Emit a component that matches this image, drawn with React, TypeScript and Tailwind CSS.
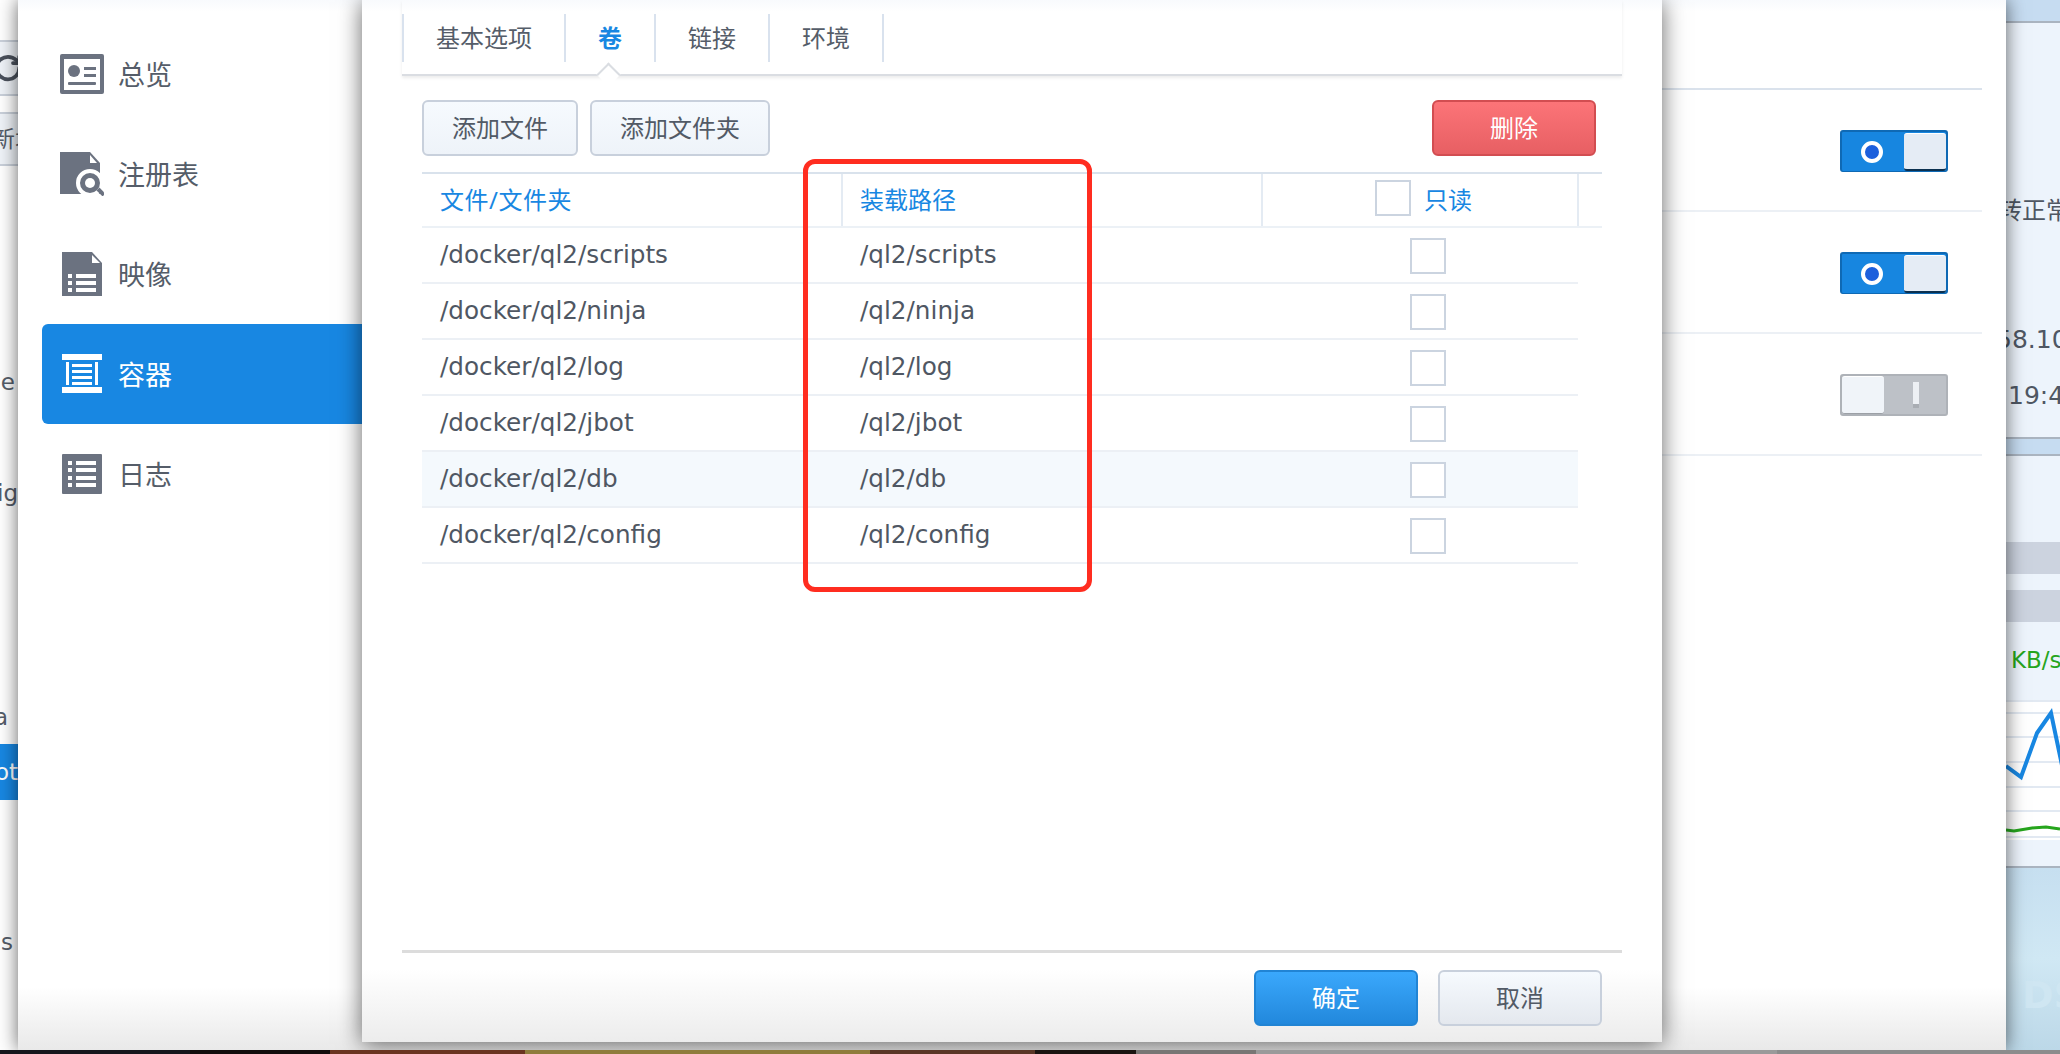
import React from 'react';
import { RotateCw } from 'lucide-react';

const NAV_ITEMS = [
  { label: '总览', icon: 'overview' },
  { label: '注册表', icon: 'registry' },
  { label: '映像', icon: 'image' },
  { label: '容器', icon: 'container' },
  { label: '日志', icon: 'log' },
];

const VOLUMES = [
  { file: '/docker/ql2/scripts', mount: '/ql2/scripts' },
  { file: '/docker/ql2/ninja', mount: '/ql2/ninja' },
  { file: '/docker/ql2/log', mount: '/ql2/log' },
  { file: '/docker/ql2/jbot', mount: '/ql2/jbot' },
  { file: '/docker/ql2/db', mount: '/ql2/db' },
  { file: '/docker/ql2/config', mount: '/ql2/config' },
];

const NavIcon = ({ name }: { name: string }) => {
  const gray = '#6b7280';
  if (name === 'overview') {
    return (
      <svg width="44" height="40" viewBox="0 0 44 40">
        <rect width="44" height="40" rx="2" fill={gray} />
        <rect x="4" y="5" width="36" height="31" fill="#fff" />
        <circle cx="14" cy="17" r="6" fill={gray} />
        <rect x="24" y="13" width="12" height="3" fill={gray} />
        <rect x="24" y="20" width="12" height="3" fill={gray} />
        <rect x="8" y="28" width="28" height="3" rx="1" fill={gray} />
      </svg>
    );
  }
  if (name === 'registry') {
    return (
      <svg width="44" height="44" viewBox="0 0 44 44">
        <path d="M0 0H30L40 11V42H0Z" fill={gray} />
        <path d="M30 3V11H37Z" fill="#fff" />
        <circle cx="30" cy="31" r="12" fill={gray} stroke="#fff" strokeWidth="4" />
        <circle cx="30" cy="31" r="5" fill="#fff" />
        <path d="M38 37L44 43" stroke={gray} strokeWidth="4" />
      </svg>
    );
  }
  if (name === 'image') {
    return (
      <svg width="40" height="44" viewBox="0 0 40 44">
        <path d="M0 0H30L40 11V44H0Z" fill={gray} />
        <path d="M30 3V11H38Z" fill="#fff" />
        <g fill="#fff">
          <rect x="6" y="22" width="4" height="4" />
          <rect x="6" y="29" width="4" height="4" />
          <rect x="6" y="36" width="4" height="4" />
          <rect x="14" y="22" width="20" height="4" />
          <rect x="14" y="29" width="20" height="4" />
          <rect x="14" y="36" width="20" height="4" />
        </g>
      </svg>
    );
  }
  if (name === 'container') {
    return (
      <svg width="40" height="40" viewBox="0 0 40 40" fill="#fff">
        <rect width="40" height="6" />
        <rect y="33" width="40" height="6" />
        <rect x="4" y="8" width="3" height="23" />
        <rect x="33" y="8" width="3" height="23" />
        <rect x="10" y="10" width="20" height="3" />
        <rect x="10" y="16" width="20" height="3" />
        <rect x="10" y="22" width="20" height="3" />
        <rect x="10" y="28" width="20" height="3" />
      </svg>
    );
  }
  return (
    <svg width="40" height="40" viewBox="0 0 40 40">
      <rect width="40" height="40" rx="1" fill={gray} />
      <g fill="#fff">
        <rect x="6" y="7" width="4" height="4" />
        <rect x="6" y="14" width="4" height="4" />
        <rect x="6" y="22" width="4" height="4" />
        <rect x="6" y="29" width="4" height="4" />
        <rect x="14" y="7" width="20" height="4" />
        <rect x="14" y="14" width="20" height="4" />
        <rect x="14" y="22" width="20" height="4" />
        <rect x="14" y="29" width="20" height="4" />
      </g>
    </svg>
  );
};

const Toggle = ({ on }: { on: boolean }) =>
  on ? (
    <div className="flex items-center justify-between w-[108px] h-[42px] rounded-[3px] bg-[#1786e0] border-t-[2px] border-x-[2px] border-b-[1px] border-[#0f69b4] pl-[18px]">
      <span className="w-[22px] h-[22px] rounded-full border-[4px] border-white bg-[#1c5fdc] ml-[1px]" />
      <span className="w-[42px] h-[38px] rounded-[3px] bg-[#e5ecf5] border-t border-white border-b-2 border-b-[#0b3050]" />
    </div>
  ) : (
    <div className="flex items-center w-[108px] h-[42px] rounded-[3px] bg-[#bdc1c7] border-2 border-[#aeb2b8]">
      <span className="w-[42px] h-[38px] rounded-[3px] bg-[#f0f4f9] border-t border-white border-b border-b-[#9ca0a6]" />
      <span className="w-[6px] h-[26px] bg-[#edf0f4] ml-[29px] border-b-4 border-[#a9adb3]" />
    </div>
  );

const Checkbox = ({ className = '' }: { className?: string }) => (
  <span className={`block w-[36px] h-[36px] bg-white border-2 border-[#cbd4e0] ${className}`} />
);

const GrayButton = ({ label, className }: { label: string; className: string }) => (
  <button className={`h-[56px] rounded-[6px] border-2 border-[#c8d0dc] bg-gradient-to-b from-[#f6fafe] to-[#eef3f9] text-[24px] text-[#525a66] ${className}`}>
    {label}
  </button>
);

// The main window's side navigation and the settings list behind the dialog
const MainWindow = () => (
  <div className="absolute left-[18px] top-0 w-[1988px] h-[1050px] flex bg-[linear-gradient(to_bottom,#f8fafd_0,#fff_12px,#fff_94%,#e9e9e9_100%)] shadow-[0_0_18px_rgba(0,0,0,0.6)]">
    <nav className="w-[344px] pt-[24px] pl-[24px] shrink-0">
      {NAV_ITEMS.map((item) => {
        const active = item.icon === 'container';
        return (
          <div
            key={item.label}
            className={`flex items-center h-[100px] pl-[18px] rounded-l-[6px] ${active ? 'bg-[#1887e2] text-white' : 'text-[#555d69]'}`}
          >
            <span className="flex justify-center w-[48px] -ml-[2px]">
              <NavIcon name={item.icon} />
            </span>
            <span className="ml-[12px] text-[27px] leading-none">{item.label}</span>
          </div>
        );
      })}
    </nav>
    <div className="flex-1 pl-[1300px] pr-[24px]">
      <div className="h-[90px] border-b-2 border-[#dae2ec]" />
      {[true, true, false].map((on, i) => (
        <div key={i} className="h-[122px] pt-[2px] flex items-center justify-end pr-[34px] border-b-2 border-[#ecf0f5]">
          <Toggle on={on} />
        </div>
      ))}
    </div>
  </div>
);

const VolumesDialog = () => (
  <div className="absolute left-[362px] top-0 w-[1300px] h-[1042px] flex flex-col px-[40px] bg-[linear-gradient(to_bottom,#f8fafd_0,#fff_12px,#fff_93%,#ececec_100%)] shadow-[0_2px_22px_rgba(0,0,0,0.6)]">
    <div className="relative h-[76px] pt-[14px] border-b-2 border-[#dadde2] shadow-[0_2px_3px_rgba(0,0,0,0.08)]">
      <div className="flex h-[48px] border-l-2 border-[#d9e2ee] text-[24px] text-[#555d69] leading-[48px]">
        <span className="w-[162px] text-center border-r-2 border-[#d9e2ee]">基本选项</span>
        <span className="w-[90px] text-center border-r-2 border-[#d9e2ee] font-bold text-[#1887e2]">卷</span>
        <span className="w-[114px] text-center border-r-2 border-[#d9e2ee]">链接</span>
        <span className="w-[114px] text-center border-r-2 border-[#d9e2ee]">环境</span>
      </div>
      {/* caret under the selected tab */}
      <span className="absolute left-[198px] top-[66px] w-[17px] h-[17px] rotate-45 bg-white border-l-2 border-t-2 border-[#dadde2]" />
    </div>

    <div className="flex items-center justify-between mt-[24px] pl-[20px] pr-[26px]">
      <div className="flex gap-[12px]">
        <GrayButton label="添加文件" className="w-[156px]" />
        <GrayButton label="添加文件夹" className="w-[180px]" />
      </div>
      <button className="w-[164px] h-[56px] rounded-[6px] border-2 border-[#d24d51] bg-gradient-to-b from-[#fc7478] to-[#e75f63] text-[24px] text-white">
        删除
      </button>
    </div>

    <div className="ml-[20px] mt-[16px] flex-1">
      <div className="flex h-[56px] w-[1180px] border-t-2 border-b-2 border-t-[#d9e2ec] border-b-[#ecf1f6] text-[24px] text-[#1887e2]">
        <div className="w-[421px] pl-[18px] flex items-center border-r-2 border-[#e4ebf3] tracking-[0.5px]">文件/文件夹</div>
        <div className="w-[420px] pl-[17px] flex items-center border-r-2 border-[#e4ebf3]">装载路径</div>
        <div className="w-[316px] flex items-center border-r-2 border-[#e4ebf3] pl-[112px] gap-[13px]">
          <Checkbox className="-mt-[4px]" />
          <span>只读</span>
        </div>
      </div>
      {VOLUMES.map((row) => (
        <div
          key={row.file}
          className={`flex items-center h-[56px] w-[1156px] border-b-2 border-[#ecf0f5] text-[24.7px] text-[#4f5763] font-['DejaVu_Sans',sans-serif] ${row.mount === '/ql2/db' ? 'bg-[#f4f9fd]' : ''}`}
        >
          <span className="w-[421px] pl-[18px]">{row.file}</span>
          <span className="w-[420px] pl-[17px]">{row.mount}</span>
          <span className="flex-1 flex justify-center pl-[15px]">
            <Checkbox className="mt-[2px]" />
          </span>
        </div>
      ))}
    </div>

    <div className="flex justify-end gap-[20px] h-[92px] pt-[17px] pr-[20px] border-t-[3px] border-[#dcdcdc]">
      <button className="w-[164px] h-[56px] rounded-[6px] border-2 border-[#2184d4] bg-gradient-to-b from-[#3aa8fc] to-[#2288dc] text-[24px] text-white">
        确定
      </button>
      <button className="w-[164px] h-[56px] rounded-[6px] border-2 border-[#c8d0dc] bg-gradient-to-b from-[#f6fafe] to-[#e4e8ee] text-[24px] text-[#525a66]">
        取消
      </button>
    </div>
  </div>
);

// Sliver of another window showing past the left edge of the main window
const LeftSliver = () => (
  <div className="absolute left-0 top-0 w-[18px] h-[1050px] overflow-hidden bg-white text-[23px] text-[#555d69] whitespace-nowrap font-['DejaVu_Sans','Noto_Sans_CJK_SC',sans-serif]">
    <div className="h-[40px]" />
    <div className="h-[56px] flex items-center border-y-2 border-[#c9d0da] bg-[#eff3f8] text-[#4a515c]">
      <RotateCw size={30} strokeWidth={3} className="shrink-0 -ml-[7px]" />
    </div>
    <div className="h-[16px]" />
    <div className="h-[54px] flex items-center -ml-[8px] border-y-2 border-[#c9d0da] bg-[#eff3f8]">新增</div>
    <div className="h-[196px]" />
    <div className="h-[40px] flex items-center justify-end pr-[3px]">ne</div>
    <div className="h-[71px]" />
    <div className="h-[40px] flex items-center justify-end">fig</div>
    <div className="h-[184px]" />
    <div className="h-[40px] flex items-center -ml-[6px]">a</div>
    <div className="h-[7px]" />
    <div className="h-[56px] flex items-center justify-end bg-[#1887e2] text-white">ot</div>
    <div className="h-[122px]" />
    <div className="h-[40px] flex items-center pl-[1px]">s</div>
  </div>
);

// Sliver of the resource monitor window on the right
const RightSliver = () => (
  <div className="absolute left-[2006px] top-0 w-[54px] h-[1050px] overflow-hidden flex flex-col bg-[#edf4fc] text-[25px] text-[#4f5763] whitespace-nowrap font-['DejaVu_Sans','Noto_Sans_CJK_SC',sans-serif]">
    <div className="h-[23px] shrink-0 bg-[#c6dcf1] border-b-2 border-[#aab4c0]" />
    <div className="h-[176px] shrink-0" />
    <div className="h-[24px] leading-[24px] shrink-0 -ml-[8px] text-[24px]">转正常</div>
    <div className="h-[103px] shrink-0" />
    <div className="h-[28px] leading-[28px] shrink-0 -ml-[10px]">58.10</div>
    <div className="h-[28px] shrink-0" />
    <div className="h-[28px] leading-[28px] shrink-0 pl-[2px]">19:42</div>
    <div className="h-[27px] shrink-0" />
    <div className="h-[19px] shrink-0 bg-[#c6dcf1] border-y-2 border-[#aab4c0]" />
    <div className="h-[86px] shrink-0" />
    <div className="h-[32px] shrink-0 bg-[#ccd3df]" />
    <div className="h-[16px] shrink-0" />
    <div className="h-[32px] shrink-0 bg-[#ccd3df]" />
    <div className="h-[24px] shrink-0" />
    <div className="h-[28px] leading-[28px] shrink-0 pl-[5px] text-[23px] text-[#26a51d]">KB/s</div>
    <div className="h-[26px] shrink-0" />
    <div className="h-[140px] shrink-0">
      <svg width="54" height="140" viewBox="0 0 54 140" className="block">
        <rect width="54" height="140" fill="#fff" />
        <g stroke="#e2e9f2" strokeWidth="2">
          <path d="M0 1H54M0 13H54M0 37H54M0 62H54M0 87H54M0 111H54M0 137H54" />
        </g>
        <path d="M0 66L15 77L31 33L45 13L61 89" fill="none" stroke="#1887e2" strokeWidth="4" />
        <path d="M0 130L8 131L26 128L40 127L54 129" fill="none" stroke="#26a51d" strokeWidth="3" />
      </svg>
    </div>
    <div className="h-[28px] shrink-0 border-b-2 border-[#aab4c0]" />
    <div className="flex-1 bg-gradient-to-b from-[#c6dff0] via-[#d0e8f4] to-[#bcd8e8] pl-[16px] pt-[108px]">
      <span className="text-[38px] font-bold leading-none text-[#cfe6f2]">DS</span>
    </div>
  </div>
);

const App: React.FC = () => (
  <div className="relative w-[2060px] h-[1054px] overflow-hidden bg-[#16161c] font-['Noto_Sans','Noto_Sans_CJK_SC',sans-serif]">
    <LeftSliver />
    <RightSliver />
    <MainWindow />
    <VolumesDialog />

    {/* wallpaper and taskbar row along the bottom edge */}
    <div className="absolute left-0 right-0 top-[1050px] h-[4px] flex">
      <div className="w-[190px] bg-[#16161c]" />
      <div className="w-[140px] bg-[#120d0c]" />
      <div className="w-[195px] bg-[#6b3420]" />
      <div className="w-[345px] bg-[#8f7c3c]" />
      <div className="w-[165px] bg-[#5a3626]" />
      <div className="w-[101px] bg-[#1a1410]" />
      <div className="w-[120px] bg-[#787674]" />
      <div className="w-[521px] bg-[#9a9a9a]" />
      <div className="flex-1 bg-[#8c8c8c]" />
    </div>

    {/* annotation frame around the mount path column */}
    <div className="absolute left-[803px] top-[159px] w-[289px] h-[433px] rounded-[12px] border-[5px] border-[#ff2d20]" />
  </div>
);

export default App;
